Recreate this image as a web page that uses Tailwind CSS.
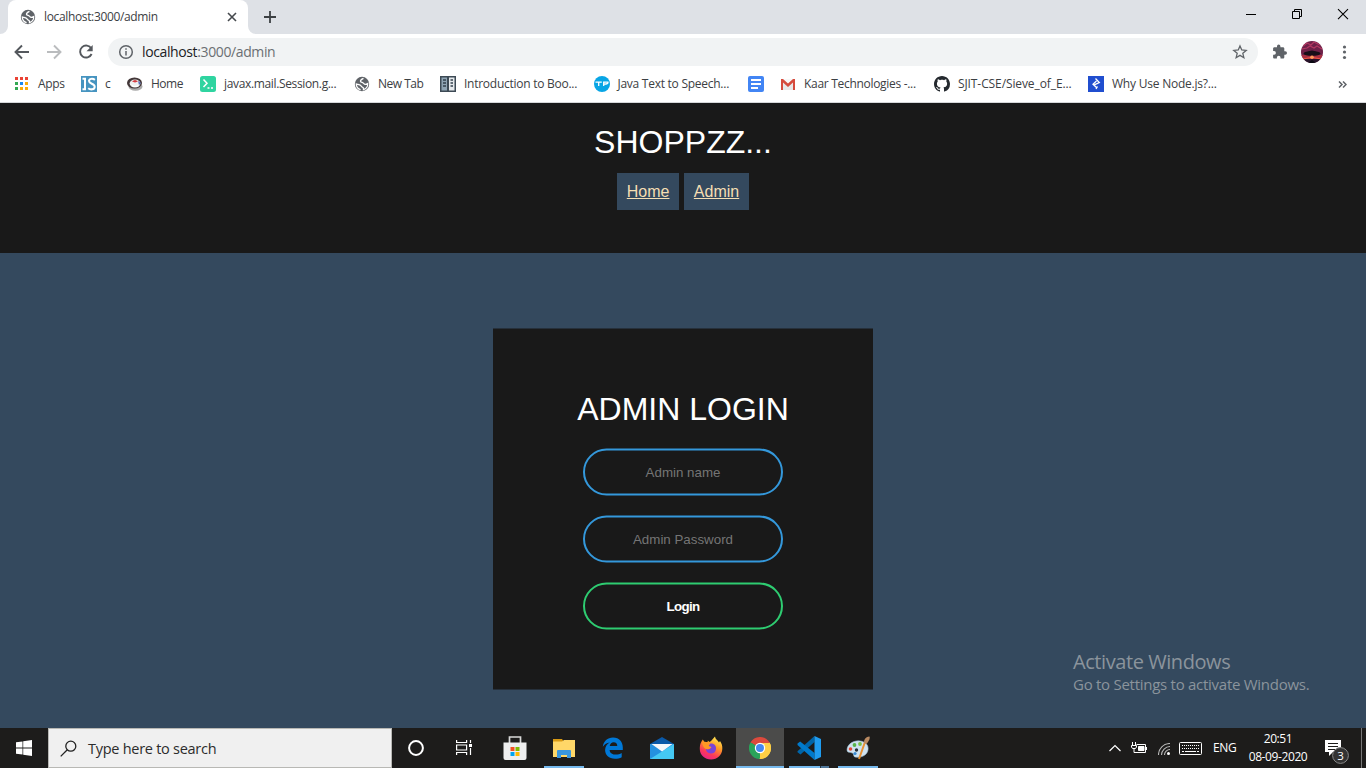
<!DOCTYPE html>
<html lang="en">
<head>
<meta charset="utf-8">
<title>localhost:3000/admin</title>
<script src="https://cdn.jsdelivr.net/npm/@tailwindcss/browser@4"></script>
</head>
<body class="w-[1366px] h-[768px] overflow-hidden flex flex-col bg-[#34495e] font-['Open_Sans','Noto_Sans',sans-serif] text-[#3c4043]">

<svg class="hidden">
  <symbol id="globe" viewBox="0 0 16 16"><circle cx="8" cy="8" r="7.200" fill="#5f6368"/><path d="M9.500 2.300C7.800 3 6.200 3.800 6.500 5.300c.2 1 1.500 1 2.400 1.400.9.500.8 1.500 2.100 1.700 1 .1 1.800-.3 2.700-.8.2 2.600-1.600 5.200-4.200 5.900.2-1.300-.2-2-1.200-2.300-1-.3-1-1.100-1.900-1.900C5.300 8.300 4 8.200 2.300 8c0 2.800 1.700 5 4.300 5.700" fill="none" stroke="#fff" stroke-width="1.300"/></symbol>
</svg>

<!-- Tab strip -->
<div class="h-[34px] shrink-0 bg-[#dee1e6] flex items-end">
  <svg class="w-2 h-2 shrink-0" viewBox="0 0 8 8"><path d="M8 0v8H0a8 8 0 0 0 8-8z" fill="#fff"/></svg>
  <div class="w-[240px] h-[34px] bg-white rounded-t-lg flex items-center pl-3 pr-[10px]">
    <svg class="w-4 h-4"><use href="#globe"/></svg>
    <span class="ml-2 text-[12px] tracking-[-0.35px] leading-4 whitespace-nowrap flex-1">localhost:3000/admin</span>
    <svg class="w-3 h-3" viewBox="0 0 12 12" stroke="#45494d" stroke-width="1.600"><path d="M2 2l8 8M10 2l-8 8"/></svg>
  </div>
  <svg class="w-2 h-2 shrink-0" viewBox="0 0 8 8"><path d="M0 0v8h8a8 8 0 0 1-8-8z" fill="#fff"/></svg>
  <svg class="w-3 h-3 ml-2 mb-[11px]" viewBox="0 0 12 12" stroke="#3c4043" stroke-width="1.800"><path d="M6 0v12M0 6h12"/></svg>
  <div class="ml-auto h-[28px] flex items-center self-start text-black">
    <svg class="w-[46px] h-7" viewBox="0 0 46 28" stroke="#000"><path d="M18 14.500h10"/></svg>
    <svg class="w-[46px] h-7" viewBox="0 0 46 28" fill="none" stroke="#000"><path d="M18.500 11.500h7v7h-7zM20.500 11.500v-2h7v7h-2"/></svg>
    <svg class="w-[46px] h-7" viewBox="0 0 46 28" stroke="#000" stroke-width="1.100"><path d="M18 9.200l10 10M28 9.200l-10 10"/></svg>
  </div>
</div>

<!-- Toolbar -->
<div class="h-9 shrink-0 bg-white flex items-center pl-3 pr-3">
  <svg class="w-5 h-5" viewBox="0 0 20 20" fill="none" stroke="#54585d" stroke-width="1.900"><path d="M17 10H4M10 3.500L3.500 10l6.500 6.500"/></svg>
  <svg class="w-5 h-5 ml-3" viewBox="0 0 20 20" fill="none" stroke="#babcbe" stroke-width="1.900"><path d="M3 10h13M10 3.500l6.500 6.500-6.500 6.500"/></svg>
  <svg class="w-5 h-5 ml-3" viewBox="0 0 20 20" fill="none"><path d="M15.300 6.500A6 6 0 1 0 15.600 12" stroke="#54585d" stroke-width="1.900"/><path d="M16.700 3v6.200h-6.200z" fill="#54585d"/></svg>
  <div class="ml-3 w-[1150px] h-7 rounded-full bg-[#f1f3f4] flex items-center pl-[10px] pr-[10px]">
    <svg class="w-4 h-4" viewBox="0 0 16 16" fill="none" stroke="#5f6368" stroke-width="1.500"><circle cx="8" cy="8" r="6.300"/><path d="M8 7v4.500M8 4.200v1.600"/></svg>
    <span class="ml-2 text-[14px] tracking-[-0.38px] leading-5 text-[#202124] flex-1">localhost<span class="text-[#6b6f73]">:3000/admin</span></span>
    <svg class="w-4 h-4" viewBox="0 0 16 16" fill="none" stroke="#5f6368" stroke-width="1.300"><path d="M8 1.900l1.750 4.100 4.450.4-3.400 2.900 1.050 4.400L8 11.350 4.150 13.700 5.200 9.300 1.800 6.400l4.450-.4z"/></svg>
  </div>
  <svg class="w-4 h-4 ml-[14px]" viewBox="0 0 16 16" fill="#5f6368"><path d="M13.300 7.300h-1V4.600c0-.7-.6-1.300-1.300-1.300H8.400v-1a1.700 1.700 0 0 0-3.400 0v1H2.400c-.7 0-1.300.6-1.300 1.300v2.500h1a1.800 1.800 0 0 1 0 3.600h-1v2.500c0 .7.600 1.300 1.300 1.300h2.500v-1a1.800 1.800 0 0 1 3.600 0v1H11c.7 0 1.300-.6 1.300-1.300v-2.500h1a1.700 1.700 0 0 0 0-3.400z"/></svg>
  <svg class="w-[22px] h-[22px] ml-[13px]" viewBox="0 0 22 22"><defs><clipPath id="av"><circle cx="11" cy="11" r="11"/></clipPath></defs><g clip-path="url(#av)"><path fill="#6f2148" d="M0 0h22v22H0z"/><path d="M2 5l4-3 4 2 3-3 6 3M1 8l5-1 3-2 4 2 3-2 5 3" stroke="#b23862" stroke-width="1.200" fill="none"/><path d="M0 14h22v4H0z" fill="#a82f42"/><path d="M0 18h22v4H0z" fill="#26132a"/><ellipse cx="11" cy="12.500" rx="8.500" ry="2.300" fill="#170e18"/><path d="M6 11q5-3 10 0z" fill="#170e18"/><path d="M2 18l8-1.500h2l8 1.500" stroke="#f05845" fill="none"/><circle cx="11" cy="16.300" r="1.800" fill="#ff9a58"/><path d="M7 22l4-3 4 3z" fill="#080810"/></g></svg>
  <svg class="w-4 h-4 ml-[14px]" viewBox="0 0 16 16" fill="#5f6368"><circle cx="7.500" cy="3" r="1.600"/><circle cx="7.500" cy="8" r="1.600"/><circle cx="7.500" cy="13.500" r="1.600"/></svg>
</div>

<!-- Bookmarks bar -->
<div class="h-[33px] shrink-0 bg-white border-b border-[#d5d7da] flex items-center pl-[14px] pb-[5px] pt-[1px] text-[12px] leading-4 tracking-[-0.35px] whitespace-nowrap">
  <div class="w-[67px] flex items-center gap-2"><svg class="w-4 h-4" viewBox="0 0 16 16"><path fill="#ea4335" d="M1 1h3v3H1zM6 1h3v3H6zM11 1h3v3h-3z"/><path fill="#34a853" d="M1 6h3v3H1zM1 11h3v3H1z"/><path fill="#1a88f0" d="M6 6h3v3H6z"/><path fill="#fbab08" d="M11 6h3v3h-3zM6 11h3v3H6zM11 11h3v3h-3z"/></svg><span>Apps</span></div>
  <div class="w-[46px] flex items-center gap-2"><svg class="w-4 h-4" viewBox="0 0 16 16"><path fill="#4694c0" d="M0 0h16v16H0z"/><path d="M1.500 2.800H5M4 2v12M1.500 13.300H5M13.900 3.900C11.800 2.200 8 2.500 8 5c0 3 5.700 2.500 5.700 5.700 0 3-4.200 3.400-6.500 1.500" fill="none" stroke="#fff" stroke-width="2"/></svg><span>c</span></div>
  <div class="w-[73px] flex items-center gap-2"><svg class="w-4 h-4" viewBox="0 0 16 16"><ellipse cx="8.500" cy="10.500" rx="7" ry="4.300" fill="#aaa"/><ellipse cx="7.500" cy="7" rx="7.500" ry="5.500" fill="#433738"/><ellipse cx="8" cy="7.500" rx="5.400" ry="4" fill="#eee"/><path d="M5 5.500q3-3 6 0l-3 1z" fill="#d43d42"/><path d="M11 5l3 2-2 2z" fill="#5167b4"/><path d="M4 8l3 2 5-1-2 2H6z" fill="#fff"/></svg><span class="tracking-[-0.5px]">Home</span></div>
  <div class="w-[154px] flex items-center gap-2"><svg class="w-4 h-4" viewBox="0 0 16 16"><rect width="16" height="16" rx="2.500" fill="#2fd4a0"/><path d="M3.500 3.500L7 7.300l-3.500 3.800M7.500 12h2M11 12h2" fill="none" stroke="#fff" stroke-width="1.500"/></svg><span>javax.mail.Session.g...</span></div>
  <div class="w-[86px] flex items-center gap-2"><svg class="w-4 h-4"><use href="#globe"/></svg><span class="tracking-[-0.5px]">New Tab</span></div>
  <div class="w-[154px] flex items-center gap-2"><svg class="w-4 h-4" viewBox="0 0 16 16"><path fill="#3d4a55" d="M0 0h16v16H0z"/><path fill="#8fa4b4" d="M1.500 1.500H7v13H1.500z"/><path fill="#e5e9ec" d="M9 1.500h5.500v13H9z"/><path d="M3 4h3M3 7h3M3 10h3M10.500 4h2.500M10.500 7h2.500M10.500 10h2.500" stroke="#35424d" stroke-width="1.500"/></svg><span class="tracking-[-0.26px]">Introduction to Boo...</span></div>
  <div class="w-[154px] flex items-center gap-[7.500px]"><svg class="w-4 h-4" viewBox="0 0 16 16"><circle cx="8" cy="8" r="8" fill="#08a5e5"/><path d="M1.500 6.200h6.300M4.700 6v4M9.700 10V6.200H14q.5 2-4 2" fill="none" stroke="#fff" stroke-width="1.300"/></svg><span class="tracking-[-0.26px]">Java Text to Speech...</span></div>
  <div class="w-[32px]"><svg class="w-4 h-4" viewBox="0 0 16 16"><rect width="16" height="16" rx="2" fill="#4285f4"/><path d="M3 4h10M3 8h10M3 12h7" stroke="#fff" stroke-width="1.900"/></svg></div>
  <div class="w-[154px] flex items-center gap-2"><svg class="w-4 h-4" viewBox="0 0 16 16"><path fill="#e7e7e7" d="M1 3h14v11H1z"/><path fill="#f8f8f8" d="M2 3l6 6 6-6z"/><path fill="#d54b3d" d="M1 3h2l5 4.500L13 3h2v11h-2V6.500L8 11 3 6.500V14H1z"/></svg><span class="tracking-[-0.3px]">Kaar Technologies -...</span></div>
  <div class="w-[154px] flex items-center gap-2"><svg class="w-4 h-4" viewBox="0 0 16 16"><path fill="#24292e" d="M8 0C3.580 0 0 3.580 0 8c0 3.540 2.290 6.530 5.470 7.590.4.070.55-.17.55-.38 0-.19-.01-.82-.01-1.490-2.010.37-2.530-.49-2.690-.94-.09-.23-.48-.94-.82-1.130-.28-.15-.68-.52-.01-.53.63-.01 1.080.58 1.230.82.72 1.210 1.870.87 2.330.66.07-.52.28-.87.51-1.070-1.780-.2-3.640-.89-3.640-3.950 0-.87.31-1.590.82-2.150-.08-.2-.36-1.020.08-2.120 0 0 .67-.21 2.200.82.64-.18 1.320-.27 2-.27s1.360.09 2 .27c1.530-1.040 2.200-.82 2.200-.82.44 1.100.16 1.920.08 2.120.51.56.82 1.270.82 2.150 0 3.070-1.870 3.750-3.650 3.950.29.25.54.73.54 1.480 0 1.070-.01 1.930-.01 2.200 0 .21.15.46.55.38A8.010 8.010 0 0 0 16 8c0-4.420-3.580-8-8-8z"/></svg><span class="tracking-[-0.1px]">SJIT-CSE/Sieve_of_E...</span></div>
  <div class="flex items-center gap-2"><svg class="w-4 h-4" viewBox="0 0 16 16"><path fill="#204ecf" d="M0 0h16v16H0z"/><path d="M7.500 2.500l3.800 4-5 2.300M8.500 5L5 8.200l4 3.800M8 13l1.500-2.500" fill="none" stroke="#fff" stroke-width="1.300"/></svg><span class="tracking-[-0.22px]">Why Use Node.js?...</span></div>
  <svg class="w-[9px] h-[7px] ml-auto mr-[19px]" viewBox="0 0 9 7" fill="none" stroke="#5f6368" stroke-width="1.500"><path d="M1 .5l3 3-3 3M5 .5l3 3-3 3"/></svg>
</div>

<!-- Web page -->
<header class="h-[150px] shrink-0 bg-[#191919] text-white text-center pt-[21px] font-['Liberation_Sans',sans-serif]">
  <h1 class="text-[32px] leading-[37px]">SHOPPZZ...</h1>
  <nav class="mt-3 flex justify-center gap-[4.4px] text-base leading-[17px] text-[#f5deb3]">
    <a class="block bg-[#34495e] p-[10px] underline">Home</a>
    <a class="block bg-[#34495e] p-[10px] underline">Admin</a>
  </nav>
</header>
<main class="flex-1 min-h-0 flex flex-col items-center pt-[75px] relative font-['Liberation_Sans',sans-serif]">
  <form class="w-[380px] h-[361px] shrink-0 bg-[#191919] translate-y-[0.5px] px-10 pt-[62px] flex flex-col items-center gap-5">
    <h1 class="text-[32px] leading-[37px] text-white mb-[1px] whitespace-nowrap">ADMIN LOGIN</h1>
    <input class="w-[200px] h-[47px] shrink-0 rounded-[24px] border-2 border-[#3498db] text-center text-[13.333px] placeholder:text-[#757575]" placeholder="Admin name">
    <input class="w-[200px] h-[47px] shrink-0 rounded-[24px] border-2 border-[#3498db] text-center text-[13.333px] placeholder:text-[#757575]" placeholder="Admin Password">
    <button type="button" class="w-[200px] h-[47px] shrink-0 rounded-[24px] border-2 border-[#2ecc71] text-center text-[13.333px] tracking-[-0.7px] font-bold text-white">Login</button>
  </form>
  <!-- Watermark laid over the desktop -->
  <div class="absolute left-[1073px] top-[396px] text-[#8b949c] font-['Open_Sans',sans-serif] whitespace-nowrap">
    <div class="text-[20px] leading-[26px] tracking-[-0.43px]">Activate Windows</div>
    <div class="text-[15px] leading-[18px] tracking-[-0.27px]">Go to Settings to activate Windows.</div>
  </div>
</main>

<!-- Taskbar -->
<footer class="h-10 shrink-0 bg-[#1d1c1b] flex items-stretch text-white">
  <div class="w-12 flex items-center justify-center"><svg class="w-4 h-4" viewBox="0 0 16 16" fill="#fff"><path d="M0 2.300l6.500-.9v6.200H0zM7.200 1.300L16 0v7.600H7.200zM0 8.400h6.500v6.200L0 13.700zM7.200 8.400H16V16l-8.800-1.300z"/></svg></div>
  <div class="w-[344px] bg-[#f0f0f0] border border-[#b8b8b4] flex items-center pl-[11px]">
    <svg class="w-[17px] h-[17px]" viewBox="0 0 17 17" fill="none" stroke="#222" stroke-width="1.300"><circle cx="10.800" cy="6.200" r="5"/><path d="M7.300 9.800L.7 16.400"/></svg>
    <span class="ml-[11px] pt-[2px] text-[14.500px] tracking-[-0.27px] text-[#2c2c2c]">Type here to search</span>
  </div>
  <div class="w-12 flex items-center justify-center"><svg class="w-4 h-4" viewBox="0 0 16 16"><circle cx="8" cy="8" r="6.900" fill="none" stroke="#fff" stroke-width="2"/></svg></div>
  <div class="w-12 flex items-center justify-center"><svg class="w-4 h-4" viewBox="0 0 16 16" fill="none" stroke="#fff" stroke-width="1.200"><path d="M.6 0v2.500h10V0M.6 15v-2.500h10V15M.6 5h10v5H.6zM14.500 0v3M14.500 8v7"/><path fill="#fff" stroke="none" d="M13 4h3v3h-3z"/></svg></div>
  <div class="w-[53px] flex items-center justify-center"><svg class="w-6 h-6" viewBox="0 0 24 24"><path d="M6.500 7V1h11v6" fill="none" stroke="#d9d9d9" stroke-width="1.700"/><path d="M.5 6.500h23V22q0 2-2 2h-19q-2 0-2-2z" fill="#eee"/><path fill="#f25022" d="M7.500 11h4v4h-4z"/><path fill="#7fba00" d="M12.500 11h4v4h-4z"/><path fill="#00a4ef" d="M7.500 16h4v4h-4z"/><path fill="#ffb900" d="M12.500 16h4v4h-4z"/></svg></div>
  <div class="w-[46px] flex flex-col items-center justify-end"><svg class="w-[22px] h-[19px] mb-[8px]" viewBox="0 0 22 19"><path d="M0 0h9l2 3H0z" fill="#d99a14"/><path d="M0 2.500h9l2-1.500h11v17H0z" fill="#ffd768"/><path d="M4 19v-7q0-1 1-1h12q1 0 1 1v7h-4v-3H8v3z" fill="#3a96dd"/></svg><div class="w-10 h-[2px] bg-[#76b9ed]"></div></div>
  <div class="w-[51px] flex items-center justify-center"><svg class="w-[22px] h-[22px]" viewBox="0 0 22 22"><path fill="#0078d7" d="M.8 9.800C1.500 4.300 5.500.5 11 .5c6.500 0 9.800 4.700 9.800 10v2.400H7.600c.3 3.300 3.200 4.700 6.200 4.700 2.300 0 4.200-.6 5.900-1.600v4.300c-1.900 1-4.200 1.500-6.800 1.500-6 0-9.800-3.500-9.800-8.700 0-3.500 1.900-6.300 4.700-7.700C4.700 5.900 2.700 6.600.8 9.800zM7.700 8.900h7.600c0-2.300-1.300-3.700-3.600-3.700-2.100 0-3.600 1.500-4 3.700z"/></svg></div>
  <div class="w-12 flex items-center justify-center"><svg class="w-6 h-[22px]" viewBox="0 0 24 22"><path d="M0 7l12-7 12 7z" fill="#0a59a8"/><path d="M0 7h24v15H0z" fill="#2490df"/><path d="M24 7v15H0z" fill="#45c8f3"/><path d="M1.500 7h21L12 14.500z" fill="#f4f7fa"/></svg></div>
  <div class="w-[50px] flex items-center justify-center"><svg class="w-6 h-6" viewBox="0 0 24 24"><defs><linearGradient id="fx" x1=".8" y1="0" x2=".3" y2="1"><stop offset="0" stop-color="#fff15a"/><stop offset=".4" stop-color="#ff9a26"/><stop offset=".75" stop-color="#fb385a"/><stop offset="1" stop-color="#e4238b"/></linearGradient></defs><path fill="url(#fx)" d="M2.500 5.500l1.300-2 2 3 3-.7V4.500L10.500 6 12 5l4-4.500c.2 2.500 2.500 3.500 4 6L21 5c1.800 2.500 2.500 5 2.300 8-.3 6-5 10.500-11.200 10.500S.8 19 .8 13c0-3 .3-5 1.700-7.500z"/><path fill="#7a43d8" d="M12 7.500c3.500 0 5.300 2.500 5 5.400-.3 3-2.500 4.700-5.200 4.600-3-.1-5-2.200-4.800-4.700 2 .9 4 .1 5-1.400l-2.500-.8c-.5-1.600.8-3.100 2.500-3.100z"/><path d="M3 6q6-1 8 2L9.500 10l3 1q-2 3-5.500 2-3-1-4-7z" fill="#ff9825"/></svg></div>
  <div class="w-12 bg-[#4b4b4a] flex flex-col items-center justify-end"><svg class="w-[22px] h-[22px] mb-[7px]" viewBox="0 0 22 22"><path d="M11 11L1.470 5.500A11 11 0 0 1 20.530 5.500z" fill="#dc4a3d"/><path d="M11 11V22A11 11 0 0 1 1.470 5.500z" fill="#2aa35a"/><path d="M11 11l9.530-5.500A11 11 0 0 1 11 22z" fill="#ffcf45"/><path d="M11 6h9.800l-.3-.5H5z" fill="#dc4a3d"/><path d="M1.470 5.500l5.200 8L11 16V11z" fill="#2aa35a"/><path d="M15.300 13.500L10.400 22h.6A11 11 0 0 0 20.800 6H11z" fill="#ffcf45"/><circle cx="11" cy="11" r="5.200" fill="#fff"/><circle cx="11" cy="11" r="4" fill="#4688f1"/></svg><div class="w-12 h-[2px] bg-[#76b9ed]"></div></div>
  <div class="w-[50px] flex flex-col items-center justify-end"><svg class="w-6 h-6 mb-[6px]" viewBox="0 0 24 24"><path d="M17.500 0v6L3.500 18.500.5 16.300v-1z" fill="#0065a9"/><path d="M.5 7.500l2.700-2L17.500 17v7L.5 9z" fill="#007acc"/><path d="M17.500 0L24 3v18l-6.500 3z" fill="#1f9cf0"/></svg><div class="w-10 h-[2px] bg-[#76b9ed] flex justify-end"><div class="w-[9px] bg-[#50779a] border-l border-[#273746]"></div></div></div>
  <div class="w-12 flex flex-col items-center justify-end"><svg class="w-6 h-6 mb-[6px]" viewBox="0 0 24 24"><path d="M1 14C1 8 8 4 14 5c5 .5 9 4 8 9-1 6-8 8-13 7-2-.4-.7-3-2.500-4C4 16 1 17 1 14z" fill="#cfe2f0" stroke="#9cbad0" stroke-width=".6"/><circle cx="4.500" cy="13" r="1.800" fill="#e54b37"/><circle cx="8.500" cy="9" r="1.900" fill="#58b44a"/><circle cx="14" cy="8" r="1.900" fill="#7cc04a"/><circle cx="9" cy="17.500" r="1.600" fill="#378bd5"/><circle cx="10.500" cy="14" r="1.700" fill="#26303a"/><path d="M19 6l-6 17" stroke="#e79235" stroke-width="2"/><path d="M18 7c0-3 1-6 5.500-6.500C24.500 3 22 6 20.500 8z" fill="#b98a62"/></svg><div class="w-10 h-[2px] bg-[#76b9ed]"></div></div>
  <div class="ml-auto flex items-center text-[12px] tracking-[-0.4px] leading-4">
    <svg class="w-3 h-2" viewBox="0 0 12 8" fill="none" stroke="#fff" stroke-width="1.200"><path d="M.5 7L6 1.500 11.500 7"/></svg>
    <svg class="w-[17px] h-3 ml-[10px]" viewBox="0 0 17 12" fill="none" stroke="#fff"><path d="M5.500 2.500h9v8h-9M15.500 5v3M1.500 0v3M4.500 0v3M.5 3.500h5v1.500l-1 1.500h-3l-1-1.500zM3 6.500v4h3"/><path d="M7.500 4.500h5.500v4H7.500z" fill="#fff"/></svg>
    <svg class="w-3 h-3 ml-[10px] mt-[2px]" viewBox="0 0 12 12" fill="none" stroke="#bbb" stroke-width="1.100"><path d="M.5 12C.5 5.500 5.500.5 12 .5M3.500 12c0-4.500 4-8.500 8.500-8.500M6.500 12c0-3 2.500-5.500 5.500-5.500"/><circle cx="10.500" cy="10.500" r="1.500" fill="#fff" stroke="none"/></svg>
    <svg class="w-[23px] h-[13px] ml-[9px]" viewBox="0 0 23 13" fill="none" stroke="#fff"><rect x=".5" y=".5" width="22" height="12" rx="1"/><path stroke-dasharray="1 1" d="M3 3.500h17M3 6.500h17"/><path d="M3 9.500h2M6 9.500h11M18 9.500h2"/></svg>
    <span class="ml-[11px] w-[24px] whitespace-nowrap">ENG</span>
    <div class="ml-[11px] w-[60px] text-center leading-[18px] whitespace-nowrap"><div>20:51</div><div>08-09-2020</div></div>
    <svg class="w-[25px] h-[25px] ml-[17px] mt-[8px] mr-[11px]" viewBox="0 0 25 25"><path fill="#fff" d="M0 0h16v12H8l-4 4v-4H0z"/><path d="M3 3.500h10M3 6.500h10M3 9.500h7" stroke="#1d1c1b"/><circle cx="15.500" cy="15.500" r="7.900" fill="#333" stroke="#888"/><text x="15.300" y="19.500" text-anchor="middle" font-size="11.500" fill="#fff" font-family="Open Sans">3</text></svg>
    <div class="w-px h-10 bg-[#777] mr-1"></div>
  </div>
</footer>
</body>
</html>
